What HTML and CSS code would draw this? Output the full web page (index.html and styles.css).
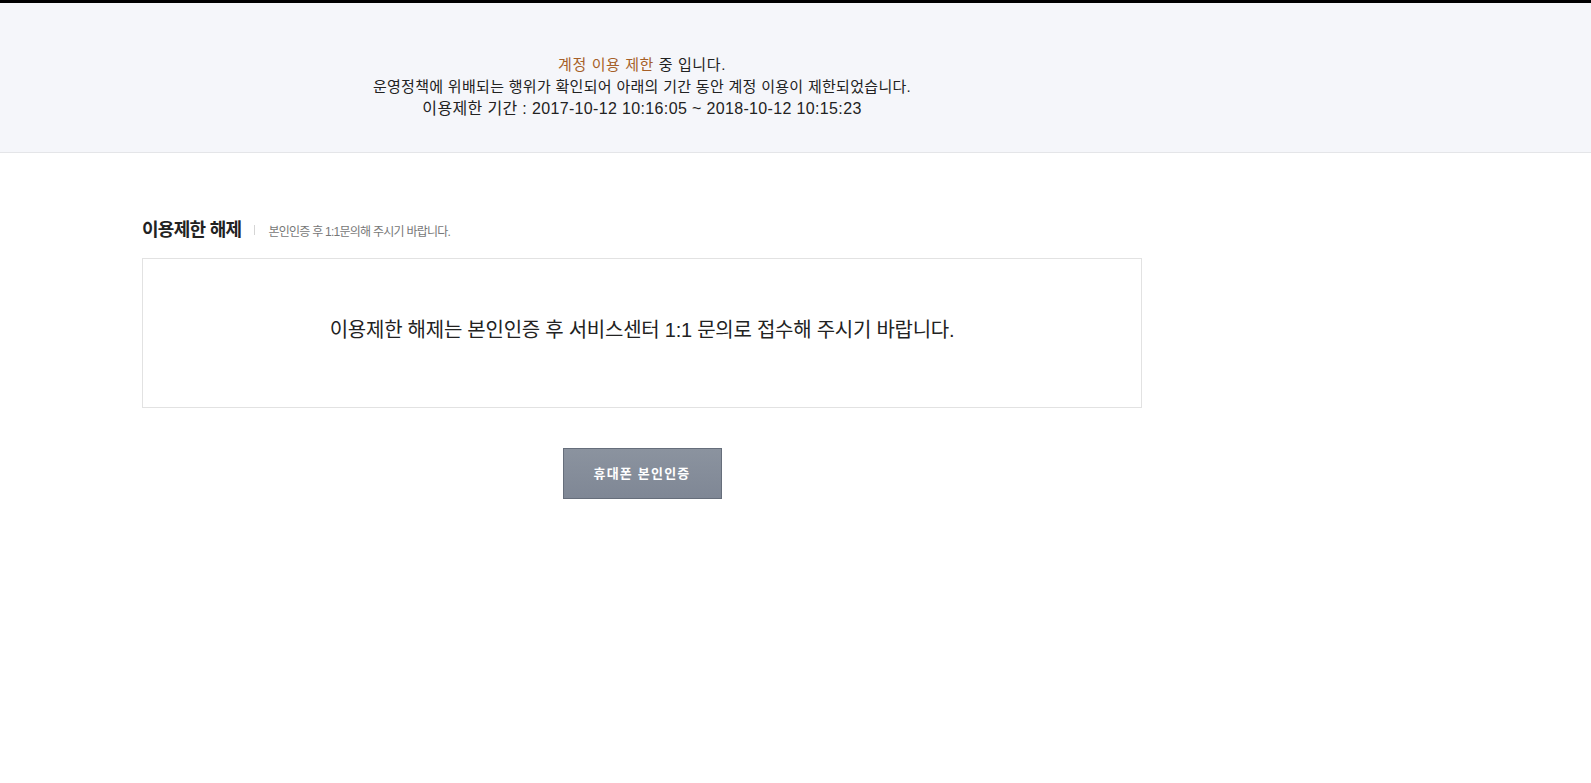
FILE: index.html
```html
<!DOCTYPE html>
<html lang="ko">
<head>
<meta charset="utf-8">
<title>이용제한 안내</title>
<link rel="stylesheet" href="styles.css">
</head>
<body>
<header class="notice">
  <div class="wrap notice-inner">
    <p class="line line-1"><span class="em">계정 이용 제한</span> 중 입니다.</p>
    <p class="line line-2">운영정책에 위배되는 행위가 확인되어 아래의 기간 동안 계정 이용이 제한되었습니다.</p>
    <p class="line line-3">이용제한 기간 : 2017-10-12 10:16:05 ~ 2018-10-12 10:15:23</p>
  </div>
</header>
<main class="wrap content">
  <div class="sec-head">
    <h2 class="sec-title">이용제한 해제</h2>
    <span class="sec-bar"></span>
    <span class="sec-desc">본인인증 후 1:1문의해 주시기 바랍니다.</span>
  </div>
  <div class="msg-box">
    <p class="msg">이용제한 해제는 본인인증 후 서비스센터 1:1 문의로 접수해 주시기 바랍니다.</p>
  </div>
  <div class="btn-row">
    <button class="btn" type="button">휴대폰 본인인증</button>
  </div>
</main>
</body>
</html>
```
FILE: styles.css
```css
* { box-sizing: border-box; }
html, body { margin: 0; padding: 0; background: #fff; }
body {
  font-family: "Liberation Sans", "Noto Sans CJK KR", sans-serif;
  color: #333;
}
p, h2 { margin: 0; }

.wrap {
  width: 1000px;
  margin-left: 142px;
}

.notice {
  border-top: 3px solid #000;
  border-bottom: 1px solid #e4e5e8;
  background: #f5f6fa;
  padding: 51px 0 32px;
}
.notice-inner {
  text-align: center;
}
.line {
  font-size: 15px;
  line-height: 22px;
  color: #222;
}
.line-1 { letter-spacing: 0.6px; }
.line-2 { letter-spacing: 0.3px; }
.line-3 { letter-spacing: 0.35px; font-size: 16px; }
.em { color: #a65f28; }

.content {
  padding-top: 65px;
}
.sec-head {
  display: flex;
  align-items: center;
  height: 24px;
  margin-bottom: 16px;
}
.sec-title {
  font-size: 18px;
  font-weight: bold;
  color: #222;
  letter-spacing: -0.7px;
  line-height: 24px;
}
.sec-bar {
  width: 1px;
  height: 10px;
  background: #d5d5d5;
  margin: 0 13px 0 13px;
}
.sec-desc {
  font-size: 12px;
  color: #777;
  letter-spacing: -0.75px;
}

.msg-box {
  height: 150px;
  border: 1px solid #e2e2e2;
  display: flex;
  align-items: center;
  justify-content: center;
  padding-bottom: 10px;
}
.msg {
  font-size: 20px;
  color: #222;
  letter-spacing: -0.25px;
}

.btn-row {
  display: flex;
  justify-content: center;
  margin-top: 40px;
}
.btn {
  width: 159px;
  height: 51px;
  border: 1px solid #666e7b;
  background: linear-gradient(#8b939f, #7f8795);
  color: #fff;
  font-family: "Liberation Sans", "Noto Sans CJK KR", sans-serif;
  font-size: 13px;
  font-weight: bold;
  letter-spacing: 1.2px;
  padding: 0 0 3px;
}
```
